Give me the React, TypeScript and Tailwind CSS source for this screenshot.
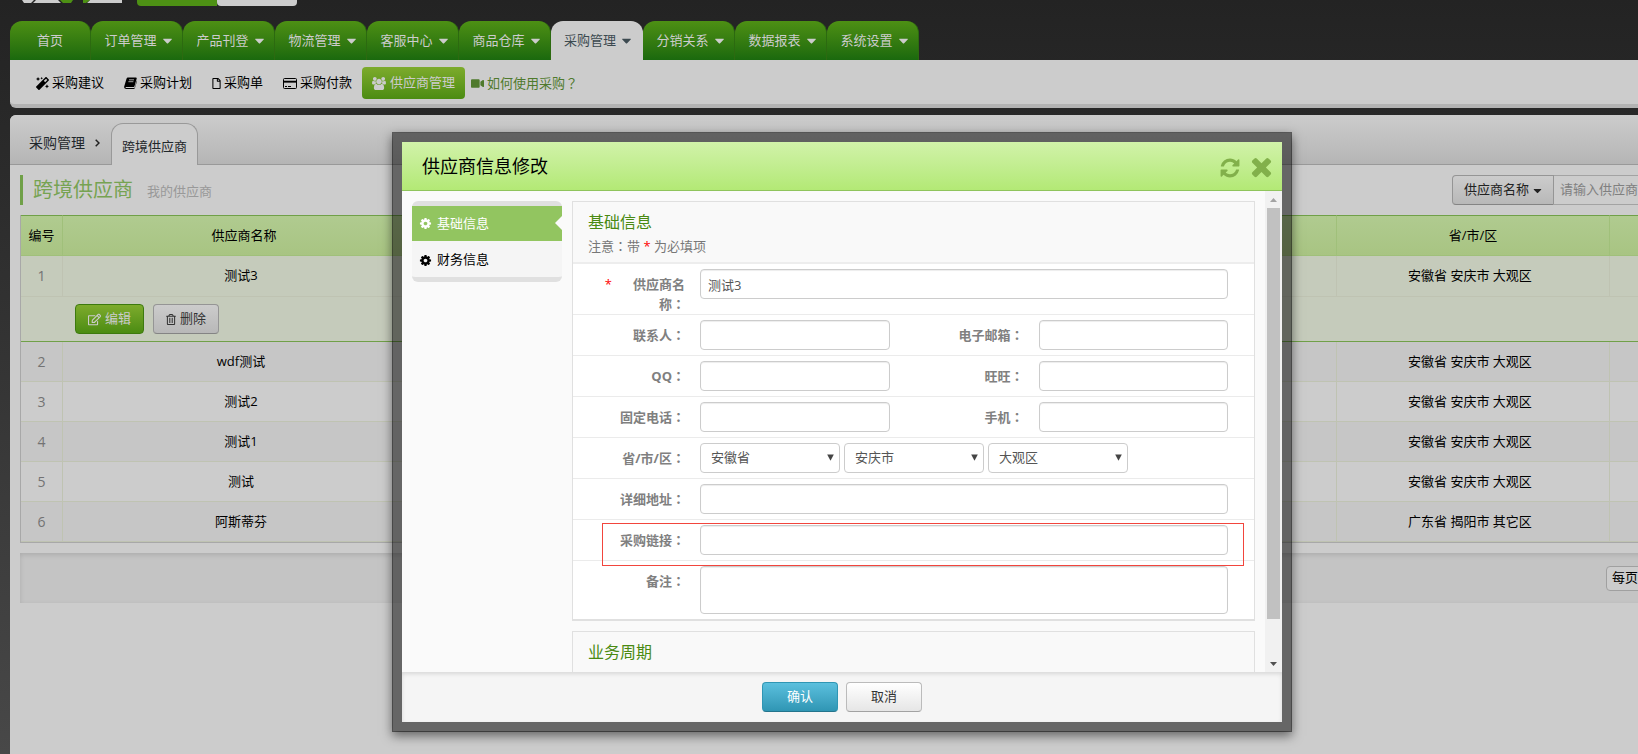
import type { ReactNode } from "react";
import {
  FaCaretDown,
  FaMagic,
  FaRegEdit,
  FaRegFile,
  FaRegTrashAlt,
  FaVideo,
} from "react-icons/fa";

const PATHS = {
  times:
    "M1490 1322q0 40-28 68l-136 136q-28 28-68 28t-68-28l-294-294-294 294q-28 28-68 28t-68-28l-136-136q-28-28-28-68t28-68l294-294-294-294q-28-28-28-68t28-68l136-136q28-28 68-28t68 28l294 294 294-294q28-28 68-28t68 28l136 136q28 28 28 68t-28 68l-294 294 294 294q28 28 28 68z",
  refresh:
    "M1639 1056q0 5-1 7-64 268-268 434.5t-478 166.5q-146 0-282.5-55t-243.5-157l-129 129q-19 19-45 19t-45-19-19-45v-448q0-26 19-45t45-19h448q26 0 45 19t19 45-19 45l-137 137q71 66 161 102t187 36q134 0 250-65t186-179q11-17 53-117 8-23 30-23h192q13 0 22.5 9.5t9.5 22.5zm25-800v448q0 26-19 45t-45 19h-448q-26 0-45-19t-19-45 19-45l138-138q-148-137-349-137-134 0-250 65t-186 179q-11 17-53 117-8 23-30 23h-199q-13 0-22.5-9.5t-9.5-22.5v-7q65-268 270-434.5t480-166.5q146 0 284 55.5t245 156.5l130-129q19-19 45-19t45 19 19 45z",
  cog: "M1152 896q0-106-75-181t-181-75-181 75-75 181 75 181 181 75 181-75 75-181zm512-109v222q0 12-8 23t-20 13l-185 28q-19 54-39 91 35 50 107 138 10 12 10 25t-9 23q-27 37-99 108t-94 71q-12 0-26-9l-138-108q-44 23-91 38-16 136-29 186-7 28-36 28h-222q-14 0-24.5-8.5t-11.5-21.5l-28-184q-49-16-90-37l-141 107q-10 9-25 9-14 0-25-11-126-114-165-168-7-10-7-23 0-12 8-23 15-21 51-66.5t54-70.5q-27-50-41-99l-183-27q-13-2-21-12.5t-8-23.5v-222q0-12 8-23t19-13l186-28q14-46 39-92-40-57-107-138-10-12-10-24 0-10 9-23 26-36 98.5-107.5t94.5-71.5q13 0 26 10l138 107q44-23 91-38 16-136 29-186 7-28 36-28h222q14 0 24.5 8.5t11.5 21.5l28 184q49 16 90 37l142-107q9-9 24-9 13 0 25 10 129 119 165 170 7 8 7 22 0 12-8 23-15 21-51 66.5t-54 70.5q26 50 41 98l183 28q13 2 21 12.5t8 23.5z",
  users:
    "M529 896q-162 5-265 128h-134q-82 0-138-40.5t-56-118.5q0-353 124-353 6 0 43.5 21t97.5 42.5 119 21.5q67 0 133-23-5 37-5 66 0 143 83 256zm1071 637q0 120-73 189.5t-194 69.5h-874q-121 0-194-69.5t-73-189.5q0-53 3.5-103.5t14-109 26.5-108.5 43-97.5 62-81 85.5-53.5 111.5-20q10 0 43 21.5t73 48 107 48 135 21.5 135-21.5 107-48 73-48 43-21.5q61 0 111.5 20t85.5 53.5 62 81 43 97.5 26.5 108.5 14 109 3.5 103.5zm-1024-1277q0 106-75 181t-181 75-181-75-75-181 75-181 181-75 181 75 75 181zm704 384q0 159-112.5 271.5t-271.5 112.5-271.5-112.5-112.5-271.5 112.5-271.5 271.5-112.5 271.5 112.5 112.5 271.5zm576 225q0 78-56 118.5t-138 40.5h-134q-103-123-265-128 83-113 83-256 0-29-5-66 66 23 133 23 59 0 119-21.5t97.5-42.5 43.5-21q124 0 124 353zm-128-609q0 106-75 181t-181 75-181-75-75-181 75-181 181-75 181 75 75 181z",
};

function Glyph({ name, className }: { name: keyof typeof PATHS; className: string }) {
  return (
    <svg
      aria-hidden="true"
      viewBox={name === "users" ? "-64 0 1920 1792" : "0 0 1792 1792"}
      fill="currentColor"
      className={className}
    >
      <path d={PATHS[name]} />
    </svg>
  );
}

function BookIcon() {
  return (
    <svg aria-hidden="true" viewBox="0 0 13 12" className="h-3 w-[13px]">
      <path d="M4.2.4h7.6c.8 0 1.1.5.9 1.2l-2.2 7.6c-.2.6-.6.9-1.3.9H2c-.4 0-.5.5-.1.8.2.2.5.2.8.2h7.4c.4 0 .6-.2.7-.5L12.7 3.6c.3.2.3.5.2.9l-2 6.5c-.2.6-.7 1-1.4 1H2.3C1 12-.2 10.8.2 9.500L2.500 1.700C2.800.9 3.400.4 4.200.4z" fill="currentColor" />
      <path d="M5 2.800h5M4.400 4.700h5" stroke="#ccc" strokeWidth=".8" />
    </svg>
  );
}

function CardIcon() {
  return (
    <svg aria-hidden="true" viewBox="0 0 14 11" className="h-[11px] w-[14px]">
      <rect x=".5" y=".5" width="13" height="10" rx="1" fill="none" stroke="currentColor" />
      <path d="M1 4h12M2 8.500h2M5 8.500h3" stroke="currentColor" />
      <path d="M1 3.500h12" stroke="currentColor" strokeWidth="1.500" />
    </svg>
  );
}

/** Full-width punctuation drawn in the middle of its cell. */
function Mark({ children }: { children: ReactNode }) {
  return <span className="font-['Noto_Sans_CJK_TC',sans-serif]">{children}</span>;
}

const NAV = ["订单管理", "产品刊登", "物流管理", "客服中心", "商品仓库", "采购管理", "分销关系", "数据报表", "系统设置"];

function TopNav() {
  return (
    <nav className="flex h-[39px] pl-[10px] text-[13px]">
      <a href="#" className="flex w-[81px] items-center justify-center rounded-t-[12px] border-r border-[#2c6a10] bg-linear-to-b from-[#4d9014] to-[#1a690e] text-[#ccc]">
        首页
      </a>
      {NAV.map((label) => (
        <a
          key={label}
          href="#"
          className={
            label === "采购管理"
              ? "flex w-[92px] items-center justify-center gap-[3px] rounded-t-[12px] bg-[#ccc] pl-1 text-[#3c4a50]"
              : "flex w-[92px] items-center justify-center gap-[3px] rounded-t-[12px] border-r border-[#2c6a10] bg-linear-to-b from-[#4d9014] to-[#1a690e] pl-[6px] text-[#ccc]"
          }
        >
          {label}
          <FaCaretDown className="size-[15px]" />
        </a>
      ))}
    </nav>
  );
}

function SubNav() {
  const item = "flex items-center gap-[3px] px-[10px]";
  return (
    <div className="ml-[10px] flex h-12 items-center rounded-bl-[6px] border-b-4 border-[#b3b3b3] bg-[#ccc] pt-[2px] pl-4 text-[13px] text-black">
      <a href="#" className={item}><FaMagic className="size-[13px]" />采购建议</a>
      <a href="#" className={item}><BookIcon />采购计划</a>
      <a href="#" className={item}><FaRegFile className="h-[11px] w-[9px]" />采购单</a>
      <a href="#" className={item}><CardIcon />采购付款</a>
      <a href="#" className="flex h-8 items-center gap-1 rounded-[4px] bg-linear-to-b from-[#7dab2c] to-[#4b8c12] px-[10px] text-[#ccc]">
        <Glyph name="users" className="h-[13px] w-[14px]" />
        供应商管理
      </a>
      <a href="#" className="flex items-center gap-[3px] px-[6px] text-[#4f7a2c]">
        <FaVideo className="size-[13px]" />
        <span>如何使用采购<Mark>？</Mark></span>
      </a>
    </div>
  );
}

const ROWS = [
  ["2", "wdf测试", "安徽省 安庆市 大观区"],
  ["3", "测试2", "安徽省 安庆市 大观区"],
  ["4", "测试1", "安徽省 安庆市 大观区"],
  ["5", "测试", "安徽省 安庆市 大观区"],
  ["6", "阿斯蒂芬", "广东省 揭阳市 其它区"],
];

function SupplierTable() {
  const th = "border-r border-b border-[#a0c07a] font-normal";
  const td = "border-r border-b border-[#bfc3b2]";
  return (
    <table className="w-full table-fixed border-separate border-spacing-0 border-b border-l border-[#a8a8a8] text-center text-[13px] text-black">
      <colgroup>
        <col className="w-[42px]" />
        <col className="w-[363px]" />
        <col />
        <col className="w-[273px]" />
        <col className="w-16" />
      </colgroup>
      <thead>
        <tr className="h-[41px] bg-linear-to-b from-[#b0cb90] to-[#a8c482]">
          <th className={`${th} border-t border-t-[#70a048]`}>编号</th>
          <th className={`${th} border-t border-t-[#70a048]`}>供应商名称</th>
          <th className={`${th} border-t border-t-[#70a048]`}></th>
          <th className={`${th} border-t border-t-[#70a048]`}>省/市/区</th>
          <th className={`${th} border-t border-t-[#70a048]`}></th>
        </tr>
      </thead>
      <tbody>
        <tr className="h-[41px] bg-[#c5cbbb]">
          <td className={`${td} text-sm text-[#737373]`}>1</td>
          <td className={`${td} pr-[6px]`}>测试3</td>
          <td className={td}></td>
          <td className={`${td} pr-[6px]`}>安徽省 安庆市 大观区</td>
          <td className={td}></td>
        </tr>
        <tr className="h-[45px] bg-[#c5cbbb]">
          <td colSpan={5} className="border-b border-[#70a048]">
            <div className="flex gap-[9px] pl-[54px]">
              <button className="flex h-[30px] w-[69px] items-center justify-center gap-1 rounded-[4px] border border-[#3d7a0e] bg-linear-to-b from-[#7dab2c] to-[#4b8c12] text-[#ccc]">
                <FaRegEdit className="size-[13px]" />
                编辑
              </button>
              <button className="flex h-[30px] w-[66px] items-center justify-center gap-1 rounded-[4px] border border-[#959595] border-b-[#848484] bg-linear-to-b from-[#ccc] to-[#b8b8b8] text-[#333]">
                <FaRegTrashAlt className="h-[11px] w-[10px]" />
                删除
              </button>
            </div>
          </td>
        </tr>
        {ROWS.map(([id, name, area]) => (
          <tr key={id} className="h-10 odd:bg-[#c6c6c6] even:bg-[#ccc]">
            <td className={`${td} text-sm text-[#737373]`}>{id}</td>
            <td className={`${td} pr-[6px]`}>{name}</td>
            <td className={td}></td>
            <td className={`${td} pr-[6px]`}>{area}</td>
            <td className={td}></td>
          </tr>
        ))}
      </tbody>
    </table>
  );
}

function Workspace() {
  return (
    <main className="mt-[7px] ml-[10px] flex-1 rounded-tl-[6px] bg-[#ccc]">
      <div className="flex h-[50px] rounded-tl-[6px] border-b border-[#999] bg-linear-to-b from-[#ccc] to-[#b5b5b5] pl-[19px]">
        <a href="#" className="flex items-center pt-[6px] text-sm text-[#1f272b]">采购管理</a>
        <svg aria-hidden="true" viewBox="0 0 5 8" className="mt-6 ml-[10px] h-2 w-[5px] self-start" fill="none" stroke="#222" strokeWidth="1.500">
          <path d="M.7.7 4 4 .7 7.300" />
        </svg>
        <a href="#" className="mt-2 -mb-px ml-[11px] flex w-[87px] items-center justify-center rounded-t-[12px] border border-b-0 border-[#999] bg-[#ccc] pt-1 text-[13px] text-[#1f272b]">
          跨境供应商
        </a>
      </div>
      <div className="px-[10px]">
        <div className="flex h-[50px] items-center">
          <div className="flex h-[30px] items-center border-l-[3px] border-[#70a048] pl-[10px]">
            <h1 className="text-xl text-[#76a352]">跨境供应商</h1>
            <span className="ml-[14px] pt-1 text-[13px] text-[#999]">我的供应商</span>
          </div>
          <div className="ml-auto flex h-[30px] text-[13px]">
            <button className="flex w-[102px] items-center justify-center gap-[2px] rounded-l-[4px] border border-[#959595] border-b-[#848484] bg-linear-to-b from-[#ccc] to-[#b8b8b8] pl-[2px] text-[#222]">
              供应商名称
              <FaCaretDown className="size-[13px]" />
            </button>
            <input aria-label="供应商名称" placeholder="请输入供应商" className="w-[120px] border border-l-0 border-[#a3a3a3] px-[6px] placeholder:text-[#808080]" />
          </div>
        </div>
        <SupplierTable />
        <div className="mt-[10px] flex h-[50px] items-center justify-end bg-[#c4c4c4] shadow-[inset_0_2px_5px_rgba(0,0,0,0.12)]">
          <button className="h-[25px] w-[68px] rounded-[4px] border border-[#a0a0a0] bg-[#ccc] px-[5px] text-left text-[13px] text-black">每页</button>
        </div>
      </div>
    </main>
  );
}

const FIELD =
  "min-w-0 flex-1 rounded-[4px] border border-[#ccc] bg-white px-[7px] text-[13px] text-[#555] shadow-[inset_0_1px_1px_rgba(0,0,0,0.075)]";
const INPUT = `h-[30px] ${FIELD}`;

function Label({ id, text, required }: { id: string; text: string; required?: boolean }) {
  return (
    <div className="mr-[15px] flex w-28 shrink-0 pt-[5px] text-[13px] leading-5">
      <span className="mr-[5px] w-[39px] shrink-0 text-right text-[#f00]">{required ? "*" : ""}</span>
      <label htmlFor={id} className="min-w-0 flex-1 text-right font-bold text-[#808080]">
        {text}<Mark>：</Mark>
      </label>
    </div>
  );
}

function Row({ children, last }: { children: ReactNode; last?: boolean }) {
  return (
    <div className={last ? "relative flex min-h-[58px] items-start pt-[5px] pr-[26px]" : "relative flex min-h-[41px] items-start border-b border-[#ebebeb] pt-[5px] pr-[26px]"}>
      {children}
    </div>
  );
}

const PAIRS = [
  ["contact", "联系人", "email", "电子邮箱"],
  ["qq", "QQ", "wangwang", "旺旺"],
  ["phone", "固定电话", "mobile", "手机"],
];

function Region({ id, label, value }: { id: string; label: string; value: string }) {
  return (
    <div className="relative w-[140px]">
      <select id={id} aria-label={label} defaultValue={value} className="h-[30px] w-full appearance-none rounded-[4px] border border-[#ccc] bg-white px-[10px] text-[13px] text-[#555]">
        <option>{value}</option>
      </select>
      <svg aria-hidden="true" viewBox="0 0 7 7" className="pointer-events-none absolute top-[11px] right-[6px] size-[7px]">
        <path d="M.2.500h6.600L3.500 6.800z" fill="#444" />
      </svg>
    </div>
  );
}

function BaseForm() {
  return (
    <form className="min-w-0 flex-1">
      <section className="border border-b-2 border-[#e0e0e0] bg-white">
        <header className="h-[62px] border-b-2 border-[#ededed] bg-[#f9f9f9] px-[15px] pt-2">
          <h3 className="text-base leading-6 text-[#4a8a12]">基础信息</h3>
          <p className="text-[13px] leading-6 text-[#777]">注意<Mark>：</Mark>带 <span className="text-[#f00]">*</span> 为必填项</p>
        </header>
        <Row>
          <Label id="name" text="供应商名称" required />
          <input id="name" defaultValue="测试3" className={INPUT} />
        </Row>
        {PAIRS.map(([idA, a, idB, b]) => (
          <Row key={idA}>
            <Label id={idA} text={a} />
            <input id={idA} className={INPUT} />
            <label htmlFor={idB} className="mr-[15px] w-[134px] shrink-0 pt-[5px] text-right text-[13px] leading-5 font-bold text-[#808080]">
              {b}<Mark>：</Mark>
            </label>
            <input id={idB} className={INPUT} />
          </Row>
        ))}
        <Row>
          <Label id="province" text="省/市/区" />
          <div className="flex gap-1">
            <Region id="province" label="省" value="安徽省" />
            <Region id="city" label="市" value="安庆市" />
            <Region id="district" label="区" value="大观区" />
          </div>
        </Row>
        <Row>
          <Label id="address" text="详细地址" />
          <input id="address" className={INPUT} />
        </Row>
        <Row>
          <Label id="link" text="采购链接" />
          <input id="link" className={INPUT} />
          <div className="pointer-events-none absolute top-[3px] right-[10px] -bottom-[6px] left-[29px] z-10 border border-[#f2453d]" />
        </Row>
        <Row last>
          <Label id="remark" text="备注" />
          <textarea id="remark" className={`h-12 resize-none ${FIELD}`} />
        </Row>
      </section>
      <section className="mt-[10px] border border-[#e0e0e0] bg-[#f9f9f9] px-[15px] pt-2 pb-6">
        <h3 className="text-base leading-6 text-[#4a8a12]">业务周期</h3>
      </section>
    </form>
  );
}

function Dialog() {
  return (
    <div role="dialog" aria-label="供应商信息修改" className="flex h-[600px] w-[900px] flex-col border-[10px] border-black/50 bg-[#fafafa] bg-clip-padding shadow-[0_4px_10px_rgba(0,0,0,0.5)]">
      <header className="flex h-[49px] shrink-0 items-center border-b border-[#8fc45c] bg-linear-to-b from-[#d1f2a9] to-[#b3e975] pr-[6px] pl-5">
        <h2 className="text-lg text-black">供应商信息修改</h2>
        <div className="ml-auto flex items-center gap-[6px] text-[#82b04b]">
          <button aria-label="刷新"><Glyph name="refresh" className="mt-1 size-[22px]" /></button>
          <button aria-label="关闭"><Glyph name="times" className="size-[29px]" /></button>
        </div>
      </header>
      <div className="flex min-h-0 flex-1 gap-[10px] overflow-hidden pl-[10px]">
        <nav className="mt-[10px] w-[150px] shrink-0 self-start rounded-[6px] border-y-[5px] border-[#e0e0e0] bg-[#f5f5f5] text-[13px]">
          <a href="#" className="relative flex h-[35px] items-center gap-[5px] bg-[#92c560] pl-[7px] text-white">
            <Glyph name="cog" className="size-[13px]" />
            基础信息
            <span className="absolute top-[10px] right-0 size-0 border-y-[7px] border-r-[7px] border-y-transparent border-r-[#fafafa]" />
          </a>
          <a href="#" className="flex h-9 items-center gap-[5px] pt-[2px] pl-[7px] text-black">
            <Glyph name="cog" className="size-[13px]" />
            财务信息
          </a>
        </nav>
        <div className="min-w-0 flex-1 pt-[10px]">
          <BaseForm />
        </div>
        <div aria-hidden="true" className="flex w-[17px] shrink-0 flex-col items-center bg-[#f1f1f1]">
          <svg viewBox="0 0 17 17" className="size-[17px]"><path d="M5 11h7L8.500 7z" fill="#a3a3a3" /></svg>
          <div className="w-[13px] flex-1 bg-[#c1c1c1]" />
          <svg viewBox="0 0 17 17" className="mt-9 size-[17px]"><path d="M5 7h7l-3.500 4z" fill="#505050" /></svg>
        </div>
      </div>
      <footer className="flex h-[50px] shrink-0 items-center justify-center gap-2 bg-[#f5f5f5] text-[13px] shadow-[inset_0_2px_4px_rgba(0,0,0,0.12)]">
        <button className="h-[30px] w-[76px] rounded-[4px] border border-[#2f96b4] border-b-[#24748c] bg-linear-to-b from-[#5bc0de] to-[#2f96b4] text-white">确认</button>
        <button className="h-[30px] w-[76px] rounded-[4px] border border-[#bbb] border-b-[#a2a2a2] bg-linear-to-b from-white to-[#e6e6e6] text-[#333]">取消</button>
      </footer>
    </div>
  );
}

export default function App() {
  return (
    <div className="h-screen overflow-hidden font-['Open_Sans','Noto_Sans_CJK_SC',sans-serif]">
      <div className="relative flex min-h-full min-w-[1684px] flex-col bg-linear-to-b from-[#232323] to-[#484848]">
        <header>
          <div className="flex h-[21px] items-start pl-[22px]">
            <svg aria-hidden="true" viewBox="0 0 100 3" className="h-[3px] w-[100px]">
              <path d="M0 0h12l-3 3H2zM14 0h22l3 3H11zM68 0h32v3H65z" fill="#ccc" />
              <path d="M38 0h13l-2 3H41zM61 0h7l-4 3h-3z" fill="#4d9014" />
            </svg>
            <div className="ml-[15px] h-[6px] w-20 rounded-bl-[4px] bg-[#4d9014]" />
            <div className="h-[6px] w-20 rounded-b-[4px] bg-[#ccc]" />
          </div>
          <TopNav />
          <SubNav />
        </header>
        <Workspace />
        <div className="absolute inset-0 flex items-start justify-center pt-[132px]">
          <Dialog />
        </div>
      </div>
    </div>
  );
}
